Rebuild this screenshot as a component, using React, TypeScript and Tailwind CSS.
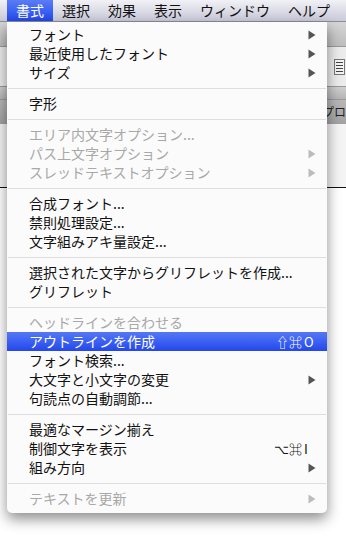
import React from "react";

type Item =
  | { sep: true }
  | { sep?: false; label: string; disabled?: boolean; sub?: boolean; mods?: string; letter?: string; active?: boolean };

const items: Item[] = [
  { label: "フォント", sub: true },
  { label: "最近使用したフォント", sub: true },
  { label: "サイズ", sub: true },
  { sep: true },
  { label: "字形" },
  { sep: true },
  { label: "エリア内文字オプション...", disabled: true },
  { label: "パス上文字オプション", disabled: true, sub: true },
  { label: "スレッドテキストオプション", disabled: true, sub: true },
  { sep: true },
  { label: "合成フォント..." },
  { label: "禁則処理設定..." },
  { label: "文字組みアキ量設定..." },
  { sep: true },
  { label: "選択された文字からグリフレットを作成..." },
  { label: "グリフレット" },
  { sep: true },
  { label: "ヘッドラインを合わせる", disabled: true },
  { label: "アウトラインを作成", mods: "⇧⌘", letter: "O", active: true },
  { label: "フォント検索..." },
  { label: "大文字と小文字の変更", sub: true },
  { label: "句読点の自動調節..." },
  { sep: true },
  { label: "最適なマージン揃え" },
  { label: "制御文字を表示", mods: "⌥⌘", letter: "I" },
  { label: "組み方向", sub: true },
  { sep: true },
  { label: "テキストを更新", disabled: true, sub: true },
];

const menus = ["書式", "選択", "効果", "表示", "ウィンドウ", "ヘルプ"];

function Arrow({ color }: { color: string }) {
  return (
    <svg width="8" height="10" viewBox="0 0 8 10">
      <path d="M0.5 0.5 L7.5 5 L0.5 9.5 Z" fill={color} />
    </svg>
  );
}

export default function App() {
  return (
    <div
      className="relative h-[536px] w-[346px] overflow-hidden bg-white text-[14px] text-black"
      style={{ fontFamily: '"Noto Sans CJK JP", "DejaVu Sans", sans-serif' }}
    >
      {/* menu bar */}
      <div className="flex h-[22px] border-b border-[#8c8c9c] bg-gradient-to-b from-[#f1f1f6] to-[#c9c9d9] pl-[7px] leading-[21px]">
        {menus.map((m, i) => (
          <div
            key={m}
            className={
              i === 0
                ? "bg-gradient-to-b from-[#5a7cf6] to-[#2446ec] px-[9px] text-white"
                : "px-[9px] text-[#111]"
            }
          >
            {m}
          </div>
        ))}
      </div>

      {/* window behind the menu */}
      <div className="h-[25px] border-b border-[#9a9a9a] bg-gradient-to-b from-[#d6d6d6] to-[#bdbdbd]" />
      <div className="flex h-[39px] items-center justify-end bg-[#ececec] pr-[1px]">
        <div className="flex h-[16px] w-[11px] flex-col justify-center gap-[2px] border border-[#777] bg-[#f5f5f5] px-[1px]">
          <div className="h-[1px] bg-[#444]" />
          <div className="h-[1px] bg-[#444]" />
          <div className="h-[1px] bg-[#444]" />
          <div className="h-[1px] bg-[#444]" />
        </div>
      </div>
      <div className="h-[14px] border-y border-[#9a9a9a] bg-gradient-to-b from-[#cfcfcf] to-[#b5b5b5]" />
      <div className="flex h-[24px] items-center justify-end bg-gradient-to-b from-[#b8b8b8] to-[#a2a2a2] text-[12px] text-[#222]">
        ノプロ
      </div>
      <div className="h-[63px] bg-[#f4f4f4]" />
      <div className="h-[1px] bg-[#111]" />

      {/* dropdown */}
      <div className="absolute left-[7px] top-[22px] w-[320px] rounded-b-[5px] bg-[#fbfbfb] pb-[5px] pt-[3px] shadow-[0_6px_14px_rgba(0,0,0,0.45)]">
        {items.map((it, i) =>
          it.sep ? (
            <div key={i} className="flex h-[12px] items-center px-[1px]">
              <div className="h-[1px] w-full bg-[#dedede]" />
            </div>
          ) : (
            <div
              key={i}
              className={
                "flex h-[19px] items-center justify-between pl-[22px] pr-[11px] leading-[19px] " +
                (it.active
                  ? "bg-gradient-to-b from-[#5577f6] to-[#2446ec] text-white"
                  : it.disabled
                    ? "text-[#a8a8a8]"
                    : "text-[#111]")
              }
            >
              <span>{it.label}</span>
              {it.mods ? (
                <span className="flex text-[13px]">
                  <span>{it.mods}</span>
                  <span className="w-[14px] pl-[2px]">{it.letter}</span>
                </span>
              ) : it.sub ? (
                <Arrow color={it.disabled ? "#bcbcbc" : "#555555"} />
              ) : null}
            </div>
          )
        )}
      </div>
    </div>
  );
}
